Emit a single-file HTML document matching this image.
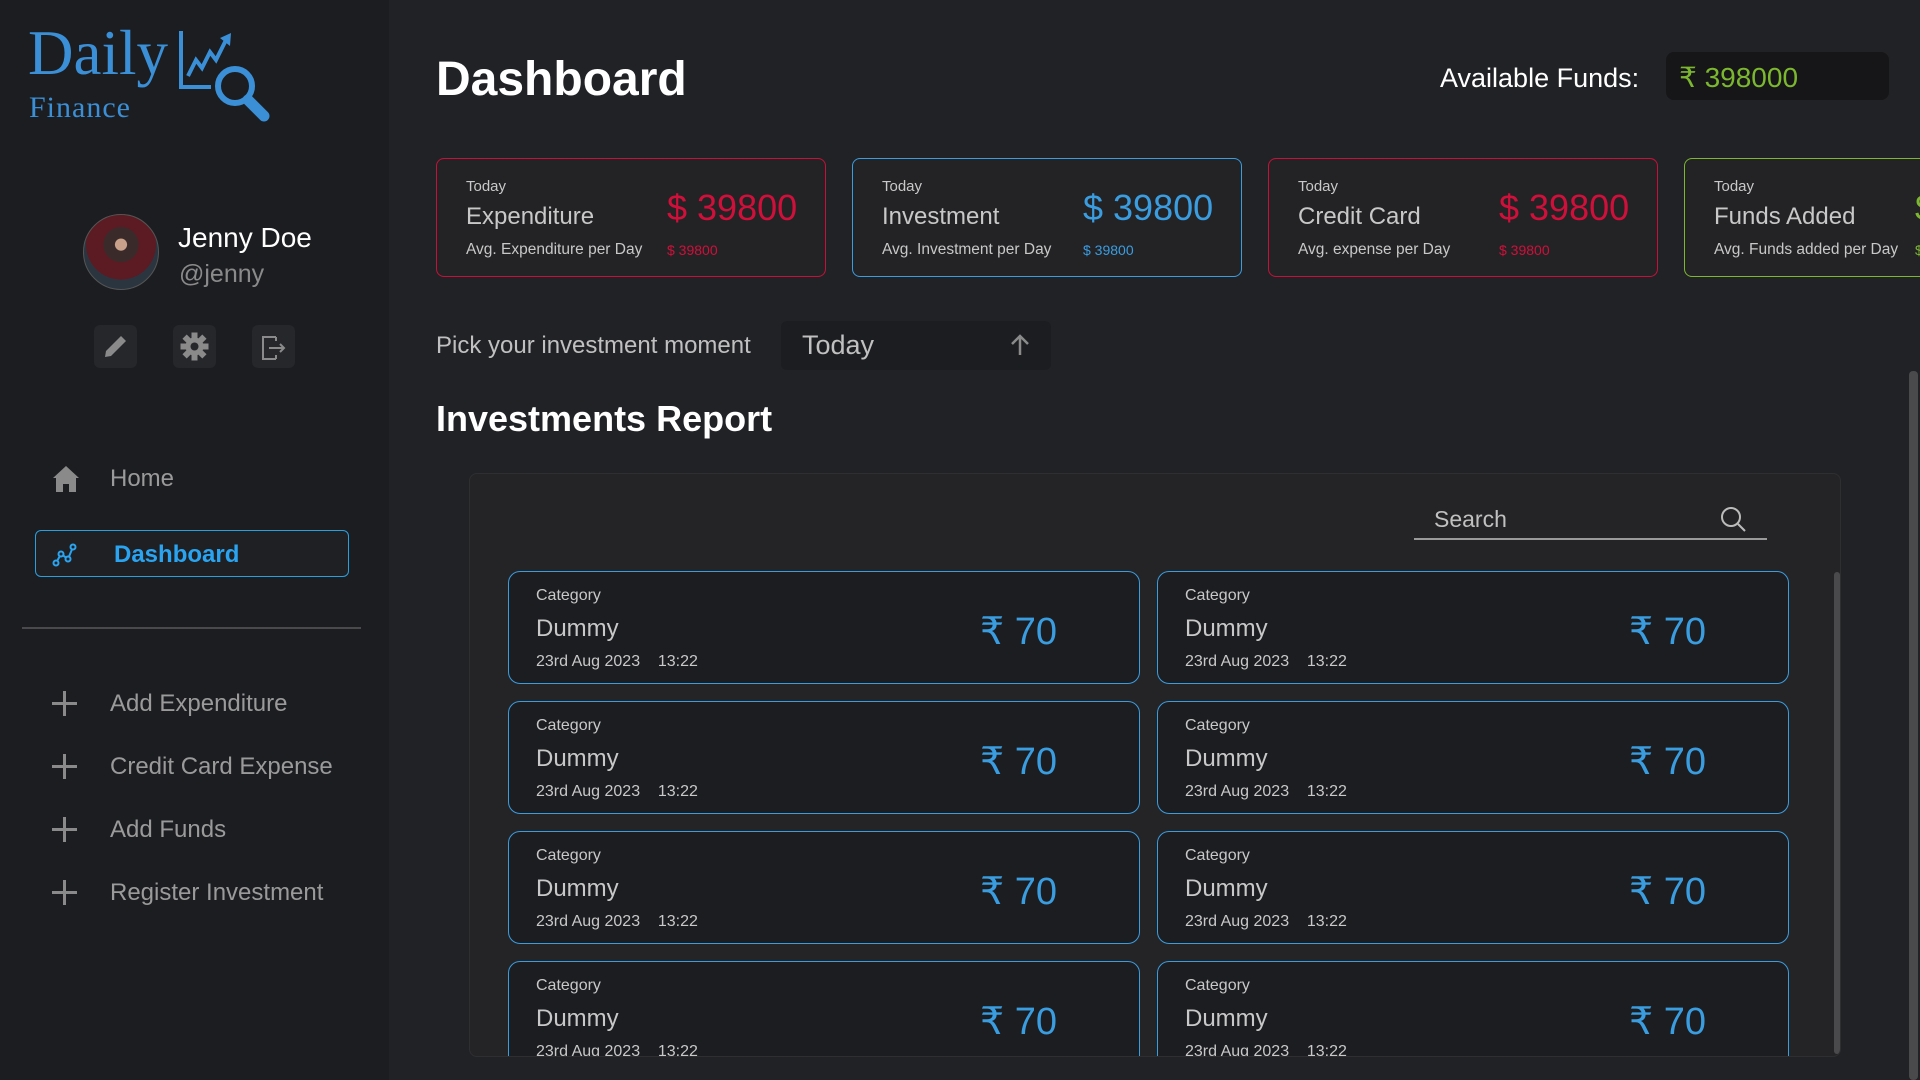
<!DOCTYPE html>
<html><head><meta charset="utf-8"><style>
*{box-sizing:border-box;margin:0;padding:0}
body{width:1920px;height:1080px;overflow:hidden;background:#212226;font-family:"Liberation Sans",sans-serif;position:relative;color:#c8c8c8}
.abs{position:absolute}
#side{left:0;top:0;width:389px;height:1080px;background:#1c1d21}
.logo1{left:28px;top:22px;font-family:"Liberation Serif",serif;font-size:63px;color:#3a8fd6;line-height:1}
.logo2{left:29px;top:93px;font-family:"Liberation Serif",serif;font-size:30px;color:#3a8fd6;letter-spacing:1px;line-height:1}
.avatar{left:83px;top:214px;width:76px;height:76px;border-radius:50%;background:radial-gradient(circle at 50% 40%,#c9a08a 0 10%,#3a2a2a 11% 30%,#5c1a22 31% 60%,#2b3540 61%);border:1px solid #555}
.ibtn{top:325px;width:43px;height:43px;background:#26272b;border-radius:6px}
.nav{left:110px;font-size:24px;color:#9a9a9a;line-height:1}
.plus{left:52px;width:25px;height:25px}
.plus:before{content:"";position:absolute;left:0;top:11px;width:25px;height:3px;background:#8a8a8a}
.plus:after{content:"";position:absolute;left:11px;top:0;width:3px;height:25px;background:#8a8a8a}
.card{top:158px;width:390px;height:119px;border:1px solid;border-radius:8px;background:#232326}
.card .t{position:absolute;left:29px;top:19px;font-size:15px;color:#c8c8c8}
.card .h{position:absolute;left:29px;top:44px;font-size:24px;color:#c8c8c8}
.card .a{position:absolute;left:29px;top:82px;font-size:15.5px;color:#c8c8c8}
.card .v{position:absolute;left:230px;top:28px;font-size:36px}
.card .s{position:absolute;left:230px;top:83px;font-size:14px}
.ic{width:632px;height:113px;border:1px solid #3a9de0;border-radius:12px;background:#1c1d21}
.ic .c{position:absolute;left:27px;top:15px;font-size:16px;color:#c8c8c8}
.ic .d{position:absolute;left:27px;top:43px;font-size:24px;color:#c8c8c8}
.ic .dt{position:absolute;left:27px;top:81px;font-size:16px;color:#c8c8c8}
.ic .v{position:absolute;left:471px;top:37px;font-size:38px;color:#3a9de0}
</style></head><body>
<div id="side" class="abs">
 <div class="abs logo1">Daily</div>
 <div class="abs logo2">Finance</div>
 <svg class="abs" style="left:176px;top:28px" width="100" height="96" viewBox="0 0 100 96">
  <path d="M5 3 V59 H35" stroke="#3a8fd6" stroke-width="4" fill="none"/>
  <path d="M12 48 L20 32 L26 40 L34 24 L40 32 L50 12" stroke="#3a8fd6" stroke-width="4" fill="none"/>
  <path d="M44 10 L55 5 L54 18 Z" fill="#3a8fd6"/>
  <circle cx="59" cy="58" r="17" stroke="#3a8fd6" stroke-width="6" fill="none"/>
  <path d="M72 72 L88 88" stroke="#3a8fd6" stroke-width="11" stroke-linecap="round"/>
 </svg>
 <div class="abs avatar"></div>
 <div class="abs" style="left:178px;top:222px;font-size:28px;color:#fff">Jenny Doe</div>
 <div class="abs" style="left:179px;top:260px;font-size:25px;color:#8a8a8a">@jenny</div>
 <div class="abs ibtn" style="left:94px"><svg width="43" height="43" viewBox="0 0 43 43"><path d="M11 32 L12 26 L27 11 L32 16 L17 31 Z" fill="#8a8a8a"/></svg></div>
 <div class="abs ibtn" style="left:173px"><svg width="43" height="43" viewBox="0 0 43 43"><g fill="#8a8a8a" transform="translate(21.5 21.5)"><circle r="9"/><rect x="-3" y="-14" width="6" height="28"/><rect x="-14" y="-3" width="28" height="6"/><rect x="-3" y="-14" width="6" height="28" transform="rotate(45)"/><rect x="-3" y="-14" width="6" height="28" transform="rotate(-45)"/></g><circle cx="21.5" cy="21.5" r="4" fill="#26272b"/></svg></div>
 <div class="abs ibtn" style="left:252px"><svg width="43" height="43" viewBox="0 0 43 43"><path d="M24 12 H11 V34 H24 M24 12 V16 M24 30 V34 M17 23 H32 M28 19 L32 23 L28 27" stroke="#8a8a8a" stroke-width="2" fill="none"/></svg></div>
 <svg class="abs" style="left:52px;top:465px" width="28" height="27" viewBox="0 0 28 27"><path d="M14 1 L1 13 L4 13 L4 27 L11 27 L11 19 L17 19 L17 27 L24 27 L24 13 L27 13 Z" fill="#8a8a8a"/></svg>
 <div class="abs nav" style="top:467px">Home</div>
 <div class="abs" style="left:35px;top:530px;width:314px;height:47px;border:1px solid #2a9fe0;border-radius:6px;background:#1f2024"></div>
 <svg class="abs" style="left:52px;top:542px" width="26" height="26" viewBox="0 0 26 26"><path d="M4 21 L9 12 L16 17 L21 5" stroke="#2aa4f0" stroke-width="2" fill="none"/><g fill="#1f2024" stroke="#2aa4f0" stroke-width="2"><circle cx="4" cy="21" r="2.5"/><circle cx="9" cy="12" r="2.5"/><circle cx="16" cy="17" r="2.5"/><circle cx="21" cy="5" r="2.5"/></g></svg>
 <div class="abs" style="left:114px;top:543px;font-size:24px;color:#2aa4f0;font-weight:bold;line-height:1">Dashboard</div>
 <div class="abs" style="left:22px;top:627px;width:339px;height:2px;background:#4a4a4c"></div>
 <div class="abs plus" style="top:691px"></div><div class="abs nav" style="top:692px">Add Expenditure</div>
 <div class="abs plus" style="top:754px"></div><div class="abs nav" style="top:755px">Credit Card Expense</div>
 <div class="abs plus" style="top:817px"></div><div class="abs nav" style="top:818px">Add Funds</div>
 <div class="abs plus" style="top:880px"></div><div class="abs nav" style="top:881px">Register Investment</div>
</div>

<div class="abs" style="left:436px;top:52px;font-size:48px;font-weight:bold;color:#fff">Dashboard</div>
<div class="abs" style="left:1440px;top:63px;font-size:27px;color:#fff">Available Funds:</div>
<div class="abs" style="left:1666px;top:52px;width:223px;height:48px;background:#161618;border-radius:8px;font-size:28px;color:#7cb82f;padding:9px 0 0 13px">₹ 398000</div>

<div class="abs card" style="left:436px;border-color:#c8103a"><div class="t">Today</div><div class="h">Expenditure</div><div class="a">Avg. Expenditure per Day</div><div class="v" style="color:#d0103a">$ 39800</div><div class="s" style="color:#d0103a">$ 39800</div></div>
<div class="abs card" style="left:852px;border-color:#3a9de0"><div class="t">Today</div><div class="h">Investment</div><div class="a">Avg. Investment per Day</div><div class="v" style="color:#3a9de0">$ 39800</div><div class="s" style="color:#3a9de0">$ 39800</div></div>
<div class="abs card" style="left:1268px;border-color:#c8103a"><div class="t">Today</div><div class="h">Credit Card</div><div class="a">Avg. expense per Day</div><div class="v" style="color:#d0103a">$ 39800</div><div class="s" style="color:#d0103a">$ 39800</div></div>
<div class="abs card" style="left:1684px;border-color:#7cb82f"><div class="t">Today</div><div class="h">Funds Added</div><div class="a">Avg. Funds added per Day</div><div class="v" style="color:#7cb82f">$ 39800</div><div class="s" style="color:#7cb82f">$ 39800</div></div>

<div class="abs" style="left:436px;top:332px;font-size:24px;color:#c0c0c0">Pick your investment moment</div>
<div class="abs" style="left:781px;top:321px;width:270px;height:49px;background:#1c1d21;border-radius:6px;font-size:27px;color:#c0c0c0;padding:9px 0 0 21px">Today
 <svg class="abs" style="left:229px;top:13px" width="20" height="22" viewBox="0 0 20 22"><path d="M10 21 V2 M2 10 L10 2 L18 10" stroke="#8a8a8a" stroke-width="2.5" fill="none"/></svg></div>
<div class="abs" style="left:436px;top:398px;font-size:36px;font-weight:bold;color:#fff">Investments Report</div>

<div class="abs" style="left:469px;top:473px;width:1372px;height:584px;background:#242426;border:1px solid #2f2f32;border-radius:8px;overflow:hidden">
 <div class="abs" style="left:964px;top:32px;font-size:23px;color:#c0c0c0">Search</div>
 <svg class="abs" style="left:1250px;top:32px" width="28" height="28" viewBox="0 0 28 28"><circle cx="11" cy="11" r="9" stroke="#bbb" stroke-width="2" fill="none"/><path d="M18 18 L25 25" stroke="#bbb" stroke-width="2"/></svg>
 <div class="abs" style="left:944px;top:64px;width:353px;height:2px;background:#9a9a9a"></div>

 <div class="abs ic" style="left:38px;top:97px"><div class="c">Category</div><div class="d">Dummy</div><div class="dt">23rd Aug 2023 &nbsp;&nbsp; 13:22</div><div class="v">₹ 70</div></div>
 <div class="abs ic" style="left:687px;top:97px"><div class="c">Category</div><div class="d">Dummy</div><div class="dt">23rd Aug 2023 &nbsp;&nbsp; 13:22</div><div class="v">₹ 70</div></div>
 <div class="abs ic" style="left:38px;top:227px"><div class="c">Category</div><div class="d">Dummy</div><div class="dt">23rd Aug 2023 &nbsp;&nbsp; 13:22</div><div class="v">₹ 70</div></div>
 <div class="abs ic" style="left:687px;top:227px"><div class="c">Category</div><div class="d">Dummy</div><div class="dt">23rd Aug 2023 &nbsp;&nbsp; 13:22</div><div class="v">₹ 70</div></div>
 <div class="abs ic" style="left:38px;top:357px"><div class="c">Category</div><div class="d">Dummy</div><div class="dt">23rd Aug 2023 &nbsp;&nbsp; 13:22</div><div class="v">₹ 70</div></div>
 <div class="abs ic" style="left:687px;top:357px"><div class="c">Category</div><div class="d">Dummy</div><div class="dt">23rd Aug 2023 &nbsp;&nbsp; 13:22</div><div class="v">₹ 70</div></div>
 <div class="abs ic" style="left:38px;top:487px"><div class="c">Category</div><div class="d">Dummy</div><div class="dt">23rd Aug 2023 &nbsp;&nbsp; 13:22</div><div class="v">₹ 70</div></div>
 <div class="abs ic" style="left:687px;top:487px"><div class="c">Category</div><div class="d">Dummy</div><div class="dt">23rd Aug 2023 &nbsp;&nbsp; 13:22</div><div class="v">₹ 70</div></div>
 <div class="abs" style="left:1364px;top:98px;width:6px;height:482px;background:#4a4a4c;border-radius:3px"></div>
</div>
<div class="abs" style="left:1909px;top:371px;width:9px;height:709px;background:#4a4a4c;border-radius:4px"></div>
</body></html>
